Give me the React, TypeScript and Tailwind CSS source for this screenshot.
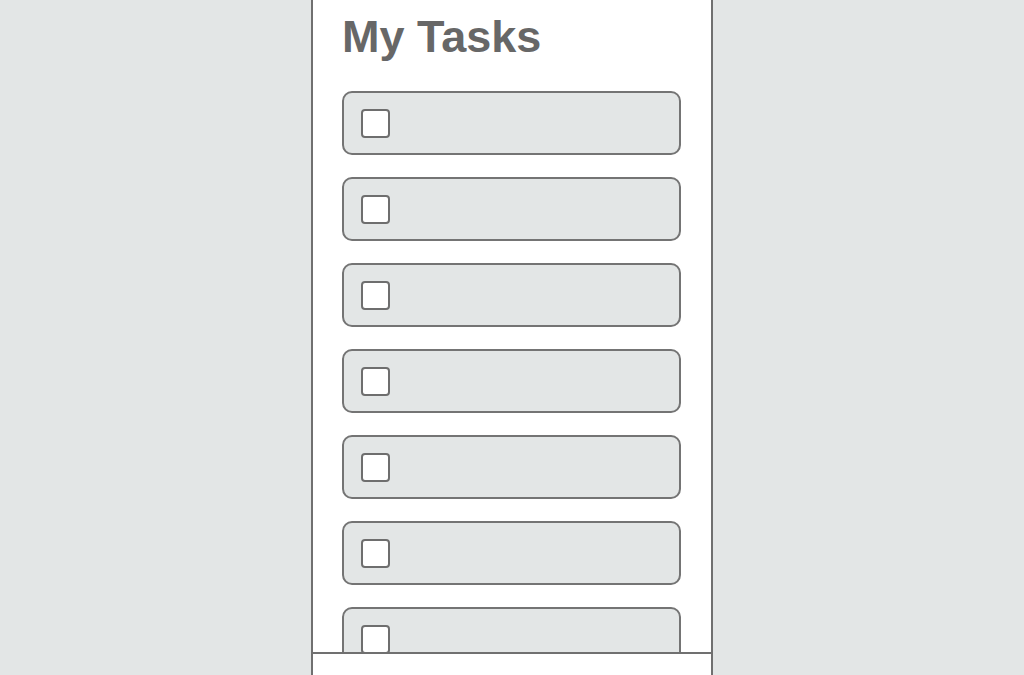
const tasks = Array.from({ length: 7 }, (_, i) => i);

export default function App() {
  return (
    <div className="flex h-[675px] w-full justify-center overflow-hidden bg-[#e3e6e6] font-['Liberation_Sans',Arial,sans-serif]">
      <div className="flex h-full w-[402px] flex-col border-x-2 border-[#707070] bg-white">
        <div className="flex-1 overflow-hidden px-[29px] pt-[15px]">
          <h1 className="text-[45px] font-bold leading-[44px] text-[#676767]">My Tasks</h1>
          <ul className="mt-[32px] flex flex-col gap-[22px]">
            {tasks.map((t) => (
              <li
                key={t}
                className="flex h-[64px] w-[339px] shrink-0 items-center rounded-[10px] border-2 border-[#747474] bg-[#e3e6e6] pl-[17px]"
              >
                <span className="h-[29px] w-[29px] rounded-[4px] border-2 border-[#6e6e6e] bg-white" />
              </li>
            ))}
          </ul>
        </div>
        <div className="h-[23px] shrink-0 border-t-2 border-[#707070] bg-white" />
      </div>
    </div>
  );
}
